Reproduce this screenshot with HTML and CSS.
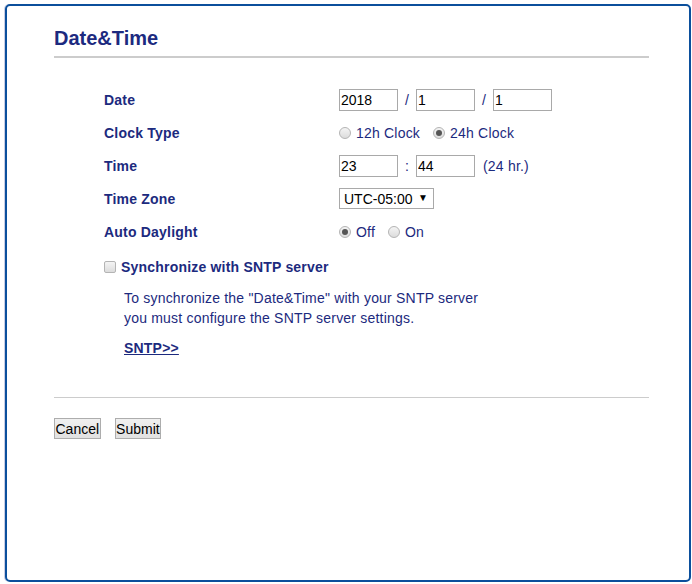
FILE: index.html
```html
<!DOCTYPE html>
<html>
<head>
<meta charset="utf-8">
<link rel="stylesheet" href="styles.css">
</head>
<body>
<div class="frame">
  <h1 class="title">Date&amp;Time</h1>
  <div class="section">
    <div class="form">
      <div class="label">Date</div>
      <div class="ctrl">
        <input class="txt" type="text" value="2018"><span class="sep">/</span><input class="txt" type="text" value="1"><span class="sep">/</span><input class="txt" type="text" value="1">
      </div>
      <div class="label">Clock Type</div>
      <div class="ctrl">
        <label class="opt"><input class="radio" type="radio" name="ct">12h Clock</label>
        <label class="opt"><input class="radio" type="radio" name="ct" checked>24h Clock</label>
      </div>
      <div class="label">Time</div>
      <div class="ctrl">
        <input class="txt" type="text" value="23"><span class="sep">:</span><input class="txt" type="text" value="44"><span class="note">(24 hr.)</span>
      </div>
      <div class="label">Time Zone</div>
      <div class="ctrl">
        <span class="selwrap"><select class="sel"><option>UTC-05:00</option></select><span class="arrow">&#9660;</span></span>
      </div>
      <div class="label">Auto Daylight</div>
      <div class="ctrl">
        <label class="opt opt-short"><input class="radio" type="radio" name="ad" checked>Off</label>
        <label class="opt"><input class="radio" type="radio" name="ad">On</label>
      </div>
    </div>
    <label class="sync"><input class="check" type="checkbox">Synchronize with SNTP server</label>
    <p class="desc">To synchronize the "Date&amp;Time" with your SNTP server<br>you must configure the SNTP server settings.</p>
    <a class="link" href="#">SNTP&gt;&gt;</a>
  </div>
  <div class="divider"></div>
  <div class="buttons">
    <button class="btn" type="button">Cancel</button>
    <button class="btn" type="button">Submit</button>
  </div>
</div>
</body>
</html>
```
FILE: styles.css
```css
html, body {
  margin: 0;
  padding: 0;
  background: #ffffff;
}
body {
  font-family: "Liberation Sans", Arial, sans-serif;
  font-size: 14px;
  color: #1c2a7e;
  letter-spacing: 0.2px;
}
.frame {
  box-sizing: border-box;
  width: 686px;
  height: 578px;
  margin: 4px 0 0 5px;
  border: 2px solid #0b4f9c;
  border-radius: 5px;
  box-shadow: -1px 0 0 #c9cde3;
  padding: 20px 40px 0 47px;
}
.title {
  margin: 0;
  font-size: 20px;
  line-height: 24px;
  font-weight: bold;
  letter-spacing: 0;
  color: #1c2a80;
  padding-bottom: 6px;
  border-bottom: 2px solid #cccccc;
}
.section {
  padding-left: 50px;
}
.form {
  margin-top: 25px;
  display: grid;
  grid-template-columns: 235px auto;
  grid-auto-rows: 33px;
}
.label, .ctrl {
  display: flex;
  align-items: center;
}
.label {
  font-weight: bold;
  color: #1c2a7e;
}
.txt {
  box-sizing: border-box;
  width: 59px;
  height: 22px;
  margin: 0;
  padding: 1px 1px;
  border: 1px solid #a9a9a9;
  font-family: "Liberation Sans", Arial, sans-serif;
  font-size: 14px;
  letter-spacing: 0;
  color: #000;
  background: #fff;
}
.sep {
  width: 18px;
  text-align: center;
  color: #1c2a7e;
}
.note {
  margin-left: 8px;
  color: #1c2a7e;
}
.opt {
  display: flex;
  align-items: center;
  margin-right: 13px;
  color: #1c2a7e;
}
.opt-short {
  margin-right: 13px;
}
.radio {
  appearance: none;
  -webkit-appearance: none;
  box-sizing: border-box;
  width: 12px;
  height: 12px;
  margin: 0 5px 0 0;
  border: 1px solid #b4b4b4;
  border-radius: 50%;
  background: linear-gradient(#f4f4f4, #dcdcdc);
  position: relative;
}
.radio:checked::after {
  content: "";
  position: absolute;
  left: 2px;
  top: 2px;
  width: 6px;
  height: 6px;
  border-radius: 50%;
  background: #555;
}
.selwrap {
  position: relative;
  display: inline-block;
  width: 95px;
  height: 21px;
}
.sel {
  appearance: none;
  -webkit-appearance: none;
  box-sizing: border-box;
  width: 95px;
  height: 21px;
  margin: 0;
  padding: 0 0 0 4px;
  border: 1px solid #a9a9a9;
  border-radius: 0;
  background: #fff;
  font-family: "Liberation Sans", Arial, sans-serif;
  font-size: 14px;
  letter-spacing: 0;
  color: #000;
}
.arrow {
  position: absolute;
  right: 6px;
  top: 5px;
  font-size: 10px;
  line-height: 10px;
  letter-spacing: 0;
  color: #000;
  pointer-events: none;
}
.sync {
  display: flex;
  align-items: center;
  height: 24px;
  margin-top: 7px;
  font-weight: bold;
  color: #1c2a7e;
}
.check {
  appearance: none;
  -webkit-appearance: none;
  box-sizing: border-box;
  width: 12px;
  height: 12px;
  margin: 0 5px 0 0;
  border: 1px solid #b4b4b4;
  border-radius: 2px;
  background: linear-gradient(#f4f4f4, #dcdcdc);
}
.desc {
  margin: 9px 0 0 20px;
  line-height: 20px;
  color: #1c2a7e;
}
.link {
  display: block;
  margin: 10px 0 0 20px;
  line-height: 20px;
  font-weight: bold;
  color: #1c2a7e;
  width: max-content;
}
.divider {
  margin-top: 39px;
  border-top: 1px solid #cccccc;
}
.buttons {
  display: flex;
  gap: 14px;
  margin-top: 20px;
}
.btn {
  box-sizing: border-box;
  height: 21px;
  margin: 0;
  padding: 0 0.5px;
  border: 1px solid #adadad;
  border-radius: 0;
  background: linear-gradient(#f0f0f0, #e1e1e1);
  font-family: "Liberation Sans", Arial, sans-serif;
  font-size: 14px;
  letter-spacing: 0;
  color: #000;
}
```
